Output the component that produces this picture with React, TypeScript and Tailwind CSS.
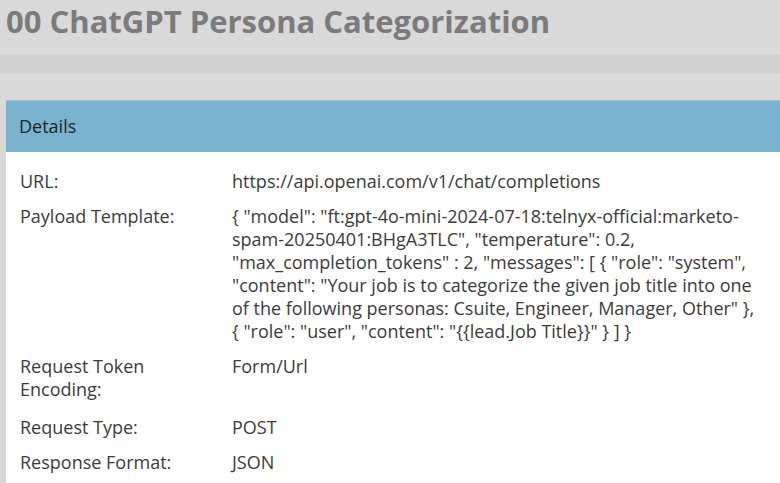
export default function App() {
  const rows: { label: string; value: string; extra?: string }[] = [
    { label: 'URL:', value: 'https://api.openai.com/v1/chat/completions' },
    {
      label: 'Payload Template:',
      value:
        '{ "model": "ft:gpt-4o-mini-2024-07-18:telnyx-official:marketo-spam-20250401:BHgA3TLC", "temperature": 0.2, "max_completion_tokens" : 2, "messages": [ { "role": "system", "content": "Your job is to categorize the given job title into one of the following personas: Csuite, Engineer, Manager, Other" }, { "role": "user", "content": "{{lead.Job Title}}" } ] }',
    },
    { label: 'Request Token Encoding:', value: 'Form/Url', extra: 'pb-[9px]' },
    { label: 'Request Type:', value: 'POST' },
    { label: 'Response Format:', value: 'JSON' },
  ];

  return (
    <div className="w-[780px] h-[483px] overflow-hidden bg-[#d9d9d9] font-['Open_Sans',sans-serif]">
      <h1 className="h-[55px] pl-[6px] pt-[1px] text-[31px] leading-[40px] font-bold text-[#7b7b7b] whitespace-nowrap">
        00 ChatGPT Persona Categorization
      </h1>
      <div className="h-[18px] bg-[#d3d3d3]" />
      <div className="h-[27px]" />

      <div className="ml-[6px] w-[820px]">
        {/* panel header */}
        <div className="h-[52px] flex items-center px-[13px] bg-[#7ab3cf] border-t border-[#9cc6db] text-[18px] text-[#1f1f1f]">
          Details
        </div>

        <div className="bg-white pt-[12px] pb-[12px] px-[14px] text-[18px] leading-[23px] text-[#3b3b3b]">
          {rows.map((r) => (
            <div key={r.label} className={`flex pt-[6px] ${r.extra ?? 'pb-[6px]'}`}>
              <div className="w-[212px] shrink-0 pr-[30px]">{r.label}</div>
              <div className="w-[528px] shrink-0">{r.value}</div>
            </div>
          ))}
        </div>
      </div>
    </div>
  );
}
